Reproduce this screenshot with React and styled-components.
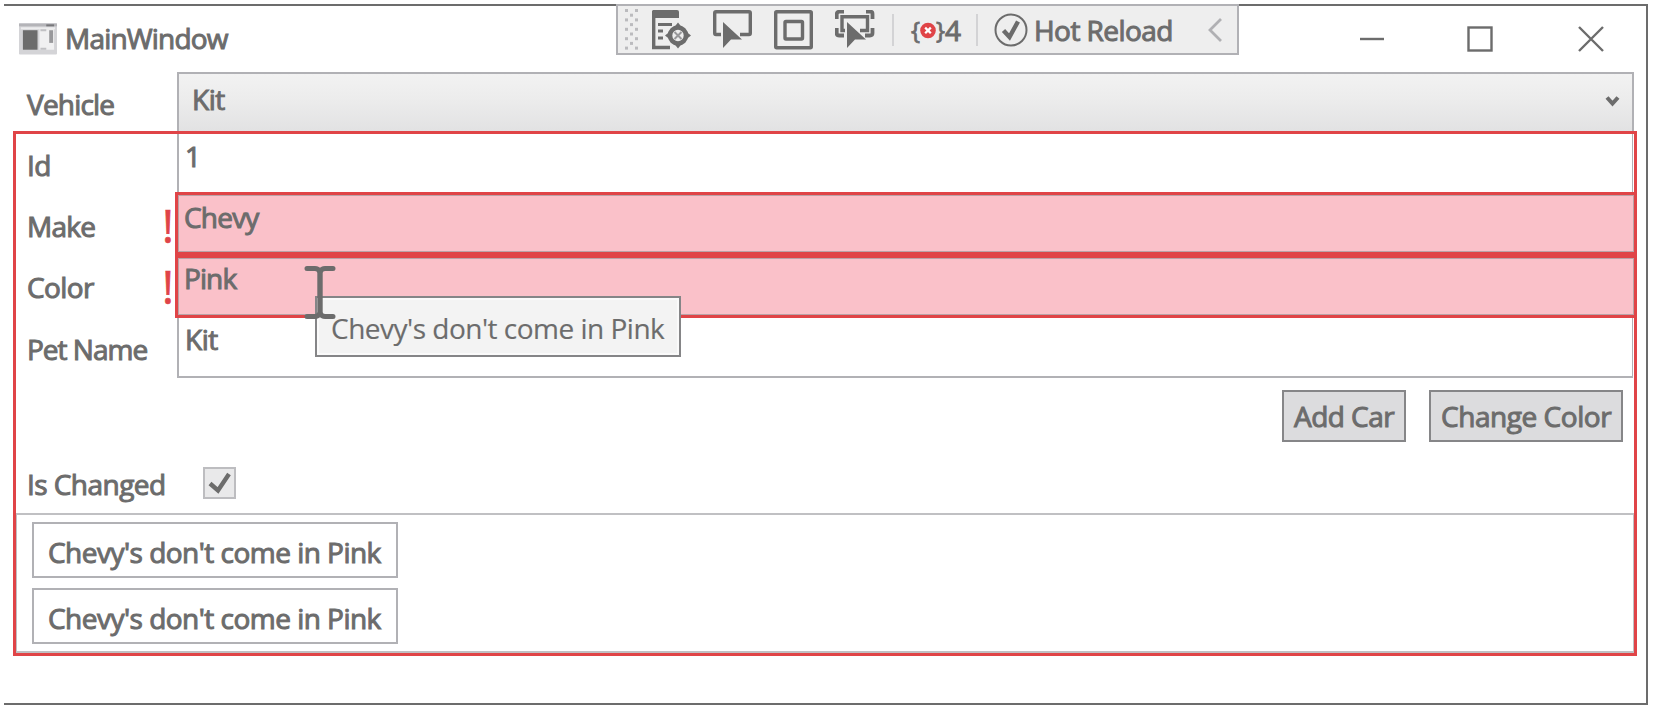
import React from 'react';
import styled, { createGlobalStyle, css } from 'styled-components';

const ink = '#6c6c6c';
const red = '#e04447';
const line = '#b1b1b5';

const Global = createGlobalStyle`
  * { box-sizing: border-box; }
  body { margin: 0; background: #fff; overflow: hidden; }
`;

const Label = styled.span`
  display: block;
  font-family: 'Open Sans', 'Noto Sans', sans-serif;
  font-size: 28px;
  line-height: 40px;
  white-space: nowrap;
  color: ${ink};
  letter-spacing: ${(p) => p.$track || 0}px;
  -webkit-text-stroke: ${(p) => (p.$thin ? 0.15 : 1)}px ${ink};
`;

const Window = styled.main`
  position: relative;
  width: 1644px;
  height: 701px;
  margin: 4px 0 0 4px;
  border: 2px solid ${ink};
  border-left: 0;
  background: #fff;
`;

const TitleBar = styled.header`
  display: flex;
  align-items: center;
  height: 66px;
  padding: 0 41px 0 15px;
`;

const Title = styled(Label)`
  flex: 1;
  margin-left: 8px;
  padding-bottom: 2px;
`;

const Caption = styled.div`
  display: flex;
  gap: 82px;
  align-items: center;
  margin-right: 1px;

  svg:last-child { margin-left: 3px; }
`;

const Toolbar = styled.div`
  position: absolute;
  top: -2px;
  left: 612px;
  display: flex;
  align-items: center;
  width: 623px;
  height: 51px;
  padding: 0 14px 0 6px;
  border: 2px solid ${line};
  background: #eeeeee;
`;

const Tool = styled.div`
  display: flex;
  align-items: center;
  flex: none;
  width: ${(p) => p.$w}px;
  margin-left: ${(p) => p.$gap}px;
`;

const Separator = styled.i`
  flex: none;
  width: 2px;
  height: 32px;
  margin-left: ${(p) => p.$gap}px;
  background: #d3d3d5;
`;

const Braces = styled(Tool)`
  justify-content: space-between;
  font: 500 24px/34px 'Open Sans', sans-serif;
  color: ${ink};
  -webkit-text-stroke: 0.8px ${ink};
`;

const Row = styled.div`
  display: grid;
  grid-template-columns: ${(p) => p.$cols || '159px 1fr'};
  height: ${(p) => p.$h}px;
`;

const LabelCell = styled.div`
  display: flex;
  justify-content: space-between;
  padding: ${(p) => p.$top}px 1px 0 ${(p) => p.$left || 11}px;
`;

const Bang = styled.span`
  font: 400 45px/40px 'Open Sans', sans-serif;
  color: ${red};
  -webkit-text-stroke: 0.6px ${red};
`;

const Combo = styled.div`
  display: flex;
  justify-content: space-between;
  padding: 5px 12px 0 13px;
  border: 2px solid ${line};
  border-bottom: 0;
  background: linear-gradient(#f2f2f2, #ececec 45%, #e2e2e3);
`;

const Frame = styled.section`
  width: 1624px;
  height: 525px;
  margin-left: 9px;
  border: 3px solid ${red};
`;

const Field = styled.div`
  position: relative;
  margin: 0 1px 0 2px;
  padding: ${(p) => p.$top}px 0 0 6px;
  border-left: 2px solid ${line};
  border-right: 1px solid ${line};
  ${(p) => p.$last && css`
    border-bottom: 2px solid ${line};
  `}
  ${(p) => p.$error && css`
    margin: 0 -3px 0 0;
    padding: ${p.$top - 4}px 0 0 6px;
    border: 3px solid ${red};
    background: #fac1c9;
    box-shadow: inset 0 0 0 1px #b9a3a7;
  `}
`;

const IBeam = styled.svg`
  position: absolute;
  z-index: 2;
  left: 126px;
  top: 7px;
`;

const Tooltip = styled.div`
  position: absolute;
  z-index: 1;
  left: 137px;
  top: 38px;
  width: 366px;
  height: 61px;
  padding: 10px 0 0 14px;
  border: 2px solid #858587;
  background: #f3f3f3;
  box-shadow: inset 0 0 0 2px #fafafa;
`;

const Actions = styled.div`
  display: flex;
  justify-content: flex-end;
  gap: 23px;
  height: 78px;
  padding: 12px 11px 0 0;
`;

const Button = styled.button`
  width: ${(p) => p.$w}px;
  height: 52px;
  padding: 0 0 1px 10px;
  border: 2px solid #868688;
  border-radius: 0;
  background: #dcdcde;
  text-align: left;
`;

const Check = styled.div`
  display: grid;
  place-items: center;
  width: 33px;
  height: 32px;
  margin: 11px 0 0 28px;
  border: 2px solid #bdbdc0;
  background: #e9e9ea;
`;

const List = styled.ul`
  display: flex;
  flex-direction: column;
  align-items: flex-start;
  gap: 10px;
  height: 140px;
  margin: 0;
  padding: 7px 0 0 15px;
  list-style: none;
  border: 2px solid #c0c0c3;
  border-width: 2px 1px 2px 1px;
`;

const Item = styled.li`
  width: 366px;
  height: 56px;
  padding: 8px 0 0 14px;
  border: 2px solid ${line};
`;

const AppIcon = () => (
  <svg width="38" height="32" viewBox="0 0 39 32">
    <rect width="39" height="32" rx="1" fill="#d4d4d7" />
    <rect width="39" height="3" fill="#b4b4b8" />
    <rect x="28" y="1" width="8" height="2" fill="#77777a" />
    <rect x="2" y="4" width="35" height="2" fill="#ededee" />
    <rect x="4" y="7" width="15" height="20" fill={ink} />
    <rect x="21" y="6" width="15" height="21" fill="#f0f0f1" />
    <path d="M22 7h6M22 26h6" stroke="#c0c0c3" strokeWidth="2" />
    <path d="M33 7v13" stroke="#98989b" strokeWidth="4" />
  </svg>
);

const Grip = () => (
  <svg width="14" height="42" viewBox="0 0 14 42" fill="#bbbbbe">
    {[0, 1, 2, 3, 4, 5, 6, 7, 8].map((r) =>
      (r % 2 ? [6] : [1, 11]).map((x) => <rect key={`${r}-${x}`} x={x} y={r * 4.7} width="3" height="3" />)
    )}
  </svg>
);

const TreeIcon = () => (
  <svg width="39" height="40" viewBox="0 0 39 40" fill="none" stroke={ink}>
    <path d="M1 0h24q2 0 2 2v6H0V1z" fill={ink} stroke="none" />
    <path d="M1.7 6v31.500H18" strokeWidth="3.400" />
    <path d="M6 14.500h14M6 21h5M6 28h5" strokeWidth="3" />
    <circle cx="26" cy="25.500" r="8" strokeWidth="4.600" />
    <path d="M26 12.500l4 5h-8zM26 38.500l4-5h-8zM13 25.500l5-4v8zM39 25.500l-5-4v8z" fill={ink} stroke="none" />
    <path d="M22.500 22l7 7M29.500 22l-7 7" stroke="#98989a" strokeWidth="2" />
  </svg>
);

const Arrow = ({ x, y }) => (
  <path d="M0 0v26l8-8.500h11z" transform={`translate(${x} ${y})`} fill={ink} stroke="none" />
);

const SelectIcon = () => (
  <svg width="40" height="40" viewBox="0 0 40 40" fill="none" stroke={ink}>
    <path d="M8 24.500H3Q1.700 24.500 1.700 23V3Q1.700 1.700 3 1.700H36Q37.300 1.700 37.300 3V23Q37.300 24.500 36 24.500H27" strokeWidth="3.400" />
    <Arrow x={10} y={12} />
  </svg>
);

const AdornerIcon = () => (
  <svg width="39" height="40" viewBox="0 0 39 40" fill="none" stroke={ink} strokeWidth="3.400">
    <rect x="1.700" y="1.700" width="35.600" height="36" rx="1" />
    <rect x="11" y="11.500" width="17.500" height="17.500" rx="1" />
  </svg>
);

const TrackIcon = () => (
  <svg width="40" height="40" viewBox="0 0 40 40" fill="none" stroke={ink}>
    <path d="M1.700 9V4.500Q1.700 1.700 4.500 1.700H9M31 1.700h4.500Q37.500 1.700 37.500 4V9M1.700 18v5q0 2.500 2.500 2.500H9M37.500 18v5q0 2.500-2.500 2.500h-5" strokeWidth="3.800" />
    <path d="M10 20.500H7V6.700H32.500V20.500H25" strokeWidth="3.400" />
    <Arrow x={12} y={12} />
  </svg>
);

const ErrorDot = () => (
  <svg width="17" height="18" viewBox="0 0 17 18">
    <circle cx="8.500" cy="9.500" r="8.300" fill={red} />
    <path d="M5.500 6.500l6 6M11.500 6.500l-6 6" stroke="#fff" strokeWidth="2.400" />
  </svg>
);

const OkCircle = () => (
  <svg width="34" height="34" viewBox="0 0 34 34" fill="none" stroke={ink}>
    <circle cx="17" cy="17" r="15.500" strokeWidth="2" />
    <path d="M9.500 17.500l6 6.500L24 8.500" strokeWidth="4.400" />
  </svg>
);

const errorText = "Chevy's don't come in Pink";

export default function App() {
  return (
    <>
      <Global />
      <Window>
        <TitleBar>
          <AppIcon />
          <Title $track={-0.8}>MainWindow</Title>
          <Caption>
            <svg width="26" height="26" stroke={ink} strokeWidth="2.400"><path d="M1 13h24" /></svg>
            <svg width="26" height="26" stroke={ink} strokeWidth="2.400" fill="none"><rect x="1.500" y="1.500" width="23" height="23" /></svg>
            <svg width="26" height="26" stroke={ink} strokeWidth="2.400"><path d="M1 1l24 24M25 1L1 25" /></svg>
          </Caption>
        </TitleBar>

        <Toolbar>
          <Tool $w={14}><Grip /></Tool>
          <Tool $w={39} $gap={14}><TreeIcon /></Tool>
          <Tool $w={40} $gap={22}><SelectIcon /></Tool>
          <Tool $w={39} $gap={21}><AdornerIcon /></Tool>
          <Tool $w={40} $gap={22}><TrackIcon /></Tool>
          <Separator $gap={17} />
          <Braces $w={34} $gap={17}><span>{'{'}</span><ErrorDot /><span>{'}'}</span></Braces>
          <Tool $w={17} $gap={0}><Label>4</Label></Tool>
          <Separator $gap={14} />
          <Tool $w={34} $gap={16}><OkCircle /></Tool>
          <Tool $w={140} $gap={6}><Label $track={-0.55}>Hot Reload</Label></Tool>
          <Tool $w={15} $gap={34}>
            <svg width="15" height="26" fill="none" stroke="#b0b0b3" strokeWidth="2.800"><path d="M13 2L2 13l11 11" /></svg>
          </Tool>
        </Toolbar>

        <Row $h={59} $cols="173px 1457px">
          <LabelCell $top={12} $left={23}><Label $track={-0.8}>Vehicle</Label></LabelCell>
          <Combo>
            <Label $track={-0.5}>Kit</Label>
            <svg width="15" height="50" viewBox="0 0 15 50" fill="none" stroke={ink} strokeWidth="4"><path d="M2 18.500l5.500 6 5.500-6" /></svg>
          </Combo>
        </Row>

        <Frame>
          <Row $h={58}>
            <LabelCell $top={11}><Label $track={-0.6}>Id</Label></LabelCell>
            <Field $top={2}><Label>1</Label></Field>
          </Row>
          <Row $h={63}>
            <LabelCell $top={14}><Label $track={-0.7}>Make</Label><Bang>!</Bang></LabelCell>
            <Field $error $top={6}><Label $track={-0.8}>Chevy</Label></Field>
          </Row>
          <Row $h={63}>
            <LabelCell $top={12}><Label $track={-0.6}>Color</Label><Bang>!</Bang></LabelCell>
            <Field $error $top={4}>
              <Label $track={-0.9}>Pink</Label>
              <IBeam width="32" height="55" viewBox="0 0 32 55" fill="none" stroke={ink}>
                <path d="M3 3.500h8q3 0 5 3 2-3 5-3h8M3 51.500h8q3 0 5-3 2 3 5 3h8" strokeWidth="5" strokeLinecap="round" />
                <path d="M16 5v45" strokeWidth="5.400" />
              </IBeam>
              <Tooltip><Label $thin $track={-0.5}>{errorText}</Label></Tooltip>
            </Field>
          </Row>
          <Row $h={60}>
            <LabelCell $top={11}><Label $track={-1}>Pet Name</Label></LabelCell>
            <Field $last $top={1}><Label $track={-0.5}>Kit</Label></Field>
          </Row>
          <Actions>
            <Button $w={124}><Label $track={-0.55}>Add Car</Label></Button>
            <Button $w={194}><Label $track={-0.45}>Change Color</Label></Button>
          </Actions>
          <Row $h={57}>
            <LabelCell $top={8}><Label $track={-0.55}>Is Changed</Label></LabelCell>
            <Check>
              <svg width="26" height="26" fill="none" stroke={ink} strokeWidth="4.400"><path d="M3 13.500l8 7L22 4" /></svg>
            </Check>
          </Row>
          <List>
            <Item><Label $track={-0.52}>{errorText}</Label></Item>
            <Item><Label $track={-0.52}>{errorText}</Label></Item>
          </List>
        </Frame>
      </Window>
    </>
  );
}
